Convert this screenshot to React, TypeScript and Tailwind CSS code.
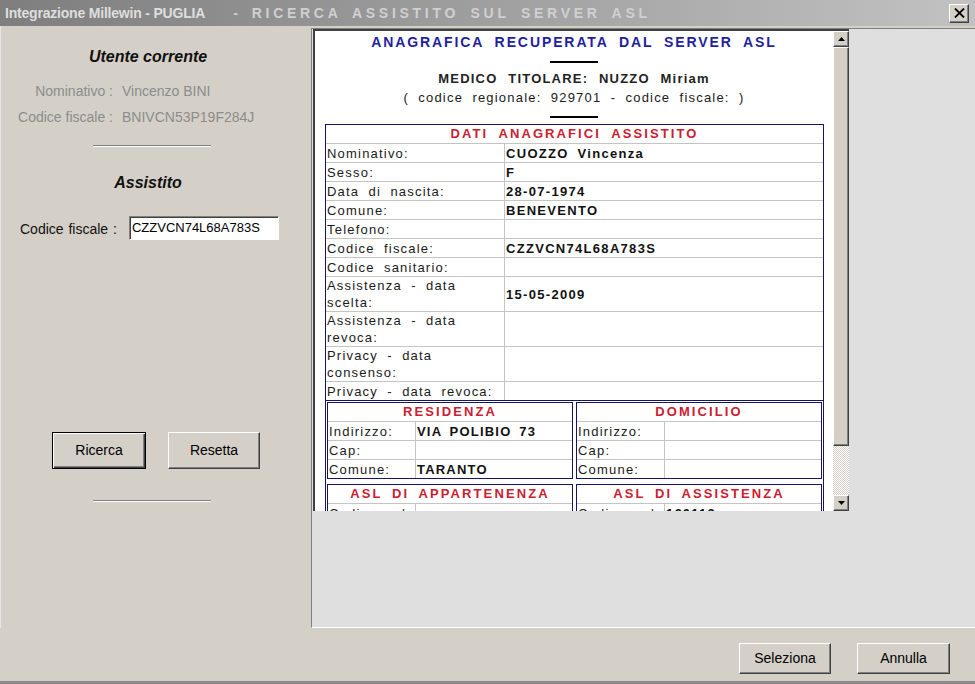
import React from 'react'

type Row = { label: string[]; value?: string }

const datiRows: Row[] = [
  { label: ['Nominativo:'], value: 'CUOZZO Vincenza' },
  { label: ['Sesso:'], value: 'F' },
  { label: ['Data di nascita:'], value: '28-07-1974' },
  { label: ['Comune:'], value: 'BENEVENTO' },
  { label: ['Telefono:'] },
  { label: ['Codice fiscale:'], value: 'CZZVCN74L68A783S' },
  { label: ['Codice sanitario:'] },
  { label: ['Assistenza - data', 'scelta:'], value: '15-05-2009' },
  { label: ['Assistenza - data', 'revoca:'] },
  { label: ['Privacy - data', 'consenso:'] },
  { label: ['Privacy - data revoca:'] },
]

function DataRow({ row, last }: { row: Row; last: boolean }) {
  const h = row.label.length > 1 ? 'h-[35px]' : 'h-[19px]'
  return (
    <div className={`flex ${h} border-b ${last ? 'border-[#14146b]' : 'border-[#c4c4c4]'}`}>
      <div className="flex w-[179px] shrink-0 flex-col justify-center border-r border-[#c4c4c4] pl-[1px] whitespace-nowrap">
        {row.label.map((l) => <span key={l}>{l}</span>)}
      </div>
      <div className="flex items-center pl-[1px] font-bold tracking-[1.3px] text-[#111] [word-spacing:4px]">{row.value}</div>
    </div>
  )
}

function SubTable({ title, rows }: { title: string; rows: [string, string][] }) {
  return (
    <div className="w-[246px] border border-[#14146b]">
      <div className="h-[19px] border-b border-[#c4c4c4] text-center font-bold leading-[18px] tracking-[2.1px] text-[#cc2030] [word-spacing:4px]">{title}</div>
      {rows.map(([l, v], i) => (
        <div key={l} className={`flex ${i === rows.length - 1 ? 'h-[18px]' : 'h-[19px] border-b border-[#c4c4c4]'}`}>
          <div className="flex w-[88px] shrink-0 items-center border-r border-[#c4c4c4] pl-[1px] whitespace-nowrap">{l}</div>
          <div className="flex items-center pl-[1px] font-bold tracking-[1.2px] text-[#111] [word-spacing:3px]">{v}</div>
        </div>
      ))}
    </div>
  )
}

function WinButton({ label, isDefault, className }: { label: string; isDefault?: boolean; className: string }) {
  const edge = isDefault
    ? 'border border-black shadow-[inset_1px_1px_0_#ffffff,inset_-1px_-1px_0_#404040,inset_-2px_-2px_0_#808080]'
    : 'border border-t-white border-l-white border-r-[#404040] border-b-[#404040] shadow-[inset_-1px_-1px_0_#808080]'
  return (
    <button className={`flex items-center justify-center bg-[#d4d0c8] text-[14px] text-black ${edge} ${className}`}>{label}</button>
  )
}

function Etched() {
  return <div className="ml-[92px] h-[2px] w-[118px] border-t border-b border-t-[#808080] border-b-white" />
}

export default function App() {
  return (
    <div className="flex h-[684px] w-[975px] flex-col overflow-hidden bg-[#d4d0c8] font-['Liberation_Sans',Arial,sans-serif]">
      {/* title bar */}
      <div className="flex h-[26px] shrink-0 items-center bg-linear-to-r from-[#7e7e7e] to-[#c2c2c2] pl-[5px] pr-[6px]">
        <div className="flex flex-1 items-center whitespace-pre text-[14px] font-bold">
          <span className="tracking-[-0.2px] text-[#dedede]">Integrazione Millewin - PUGLIA</span>
          <span className="ml-[28px] text-[#d0d0d0]">-</span>
          <span className="ml-[14px] tracking-[3.7px] text-[#d0d0d0] [word-spacing:4px]">RICERCA ASSISTITO SUL SERVER ASL</span>
        </div>
        <div className="flex h-[19px] w-[20px] items-center justify-center border border-t-white border-l-white border-r-[#404040] border-b-[#404040] bg-[#d4d0c8] shadow-[inset_-1px_-1px_0_#808080]">
          <svg width="11" height="10" viewBox="0 0 11 10">
            <path d="M1 0.5 L10 9.5 M10 0.5 L1 9.5" stroke="#000" strokeWidth="1.8" />
          </svg>
        </div>
      </div>

      <div className="flex h-[602px] shrink-0">
        {/* left panel */}
        <div className="flex w-[311px] shrink-0 flex-col border-l border-[#e8e6e0]">
          <div className="mt-[22px] pr-[16px] text-center text-[16px] font-bold italic leading-[18px] text-[#111]">Utente corrente</div>
          <div className="mt-[12px] grid grid-cols-[112px_auto] gap-x-[9px] text-[14px] text-[#8c8c8c]">
            <div className="flex h-[26px] items-center justify-end">Nominativo :</div>
            <div className="flex h-[26px] items-center">Vincenzo BINI</div>
            <div className="flex h-[26px] items-center justify-end">Codice fiscale :</div>
            <div className="flex h-[26px] items-center">BNIVCN53P19F284J</div>
          </div>
          <div className="mt-[15px]"><Etched /></div>
          <div className="mt-[27px] pr-[16px] text-center text-[16px] font-bold italic leading-[18px] text-[#111]">Assistito</div>
          <div className="mt-[23px] flex items-center pl-[19px]">
            <span className="mt-[4px] text-[14px] text-[#111] [word-spacing:1px]">Codice fiscale :</span>
            <div className="ml-[12px] flex h-[24px] w-[150px] items-center border border-t-[#808080] border-l-[#808080] border-b-white border-r-white bg-white pl-[2px] text-[13px] text-black shadow-[inset_1px_1px_0_#404040]">
              CZZVCN74L68A783S
            </div>
          </div>
          <div className="mt-[192px] flex pl-[51px]">
            <WinButton label="Ricerca" isDefault className="h-[37px] w-[94px]" />
            <WinButton label="Resetta" className="ml-[22px] h-[37px] w-[92px]" />
          </div>
          <div className="mt-[31px]"><Etched /></div>
        </div>

        {/* right panel */}
        <div className="mt-[2px] flex flex-1 flex-col border-t border-l border-b border-[#808080] border-b-white bg-[#dfdfdf]">
          <div className="ml-[1px] flex h-[482px] w-[536px] border-t-2 border-l-2 border-[#404040]">
            <div className="h-full w-[518px] overflow-hidden bg-white text-[13px] leading-[17px] tracking-[1.2px] text-[#1a1a1a] [word-spacing:4.5px]">
              <div className="pt-[3px] text-center text-[14px] font-bold tracking-[1.9px] text-[#1f1f9f] [word-spacing:5px]">ANAGRAFICA RECUPERATA DAL SERVER ASL</div>
              <div className="mx-auto mt-[10px] h-[2px] w-[48px] bg-black" />
              <div className="mt-[7px] text-center font-bold tracking-[1.2px] text-[#222] [word-spacing:6px]">MEDICO TITOLARE: NUZZO Miriam</div>
              <div className="mt-[2px] text-center">( codice regionale: 929701 - codice fiscale: )</div>
              <div className="mx-auto mt-[10px] h-[2px] w-[48px] bg-black" />

              <div className="ml-[10px] mt-[6px] w-[499px] border border-[#14146b]">
                <div className="h-[19px] border-b border-[#c4c4c4] text-center font-bold leading-[18px] tracking-[2.1px] text-[#cc2030] [word-spacing:5px]">DATI ANAGRAFICI ASSISTITO</div>
                {datiRows.map((r, i) => <DataRow key={r.label.join(' ')} row={r} last={i === datiRows.length - 1} />)}
                <div className="flex flex-col gap-[5px] px-[1px] pt-[1px]">
                  <div className="flex gap-[3px]">
                    <SubTable title="RESIDENZA" rows={[['Indirizzo:', 'VIA POLIBIO 73'], ['Cap:', ''], ['Comune:', 'TARANTO']]} />
                    <SubTable title="DOMICILIO" rows={[['Indirizzo:', ''], ['Cap:', ''], ['Comune:', '']]} />
                  </div>
                  <div className="flex gap-[3px]">
                    <SubTable title="ASL DI APPARTENENZA" rows={[['Codice asl:', ''], ['Descrizione:', '']]} />
                    <SubTable title="ASL DI ASSISTENZA" rows={[['Codice asl:', '160113'], ['Descrizione:', 'TARANTO']]} />
                  </div>
                </div>
              </div>
            </div>

            {/* scrollbar */}
            <div className="flex w-[16px] flex-col">
              <div className="flex h-[16px] items-center justify-center border border-t-white border-l-white border-r-[#404040] border-b-[#404040] bg-[#d4d0c8] shadow-[inset_-1px_-1px_0_#808080]">
                <svg width="7" height="4" viewBox="0 0 7 4"><path d="M3.5 0 L7 4 L0 4 Z" fill="#000" /></svg>
              </div>
              <div className="h-[399px] border border-t-white border-l-white border-r-[#404040] border-b-[#404040] bg-[#d4d0c8] shadow-[inset_-1px_-1px_0_#808080]" />
              <div className="flex-1 bg-[repeating-conic-gradient(#d4d0c8_0_25%,#ffffff_0_50%)] bg-[length:2px_2px]" />
              <div className="flex h-[16px] items-center justify-center border border-t-white border-l-white border-r-[#404040] border-b-[#404040] bg-[#d4d0c8] shadow-[inset_-1px_-1px_0_#808080]">
                <svg width="7" height="4" viewBox="0 0 7 4"><path d="M0 0 L7 0 L3.5 4 Z" fill="#000" /></svg>
              </div>
            </div>
          </div>
        </div>
      </div>

      {/* bottom bar */}
      <div className="flex flex-1 justify-end gap-[26px] border-b-[3px] border-[#8a8a8a] pr-[25px] pt-[15px]">
        <WinButton label="Seleziona" className="h-[31px] w-[92px]" />
        <WinButton label="Annulla" className="h-[31px] w-[93px]" />
      </div>
    </div>
  )
}
